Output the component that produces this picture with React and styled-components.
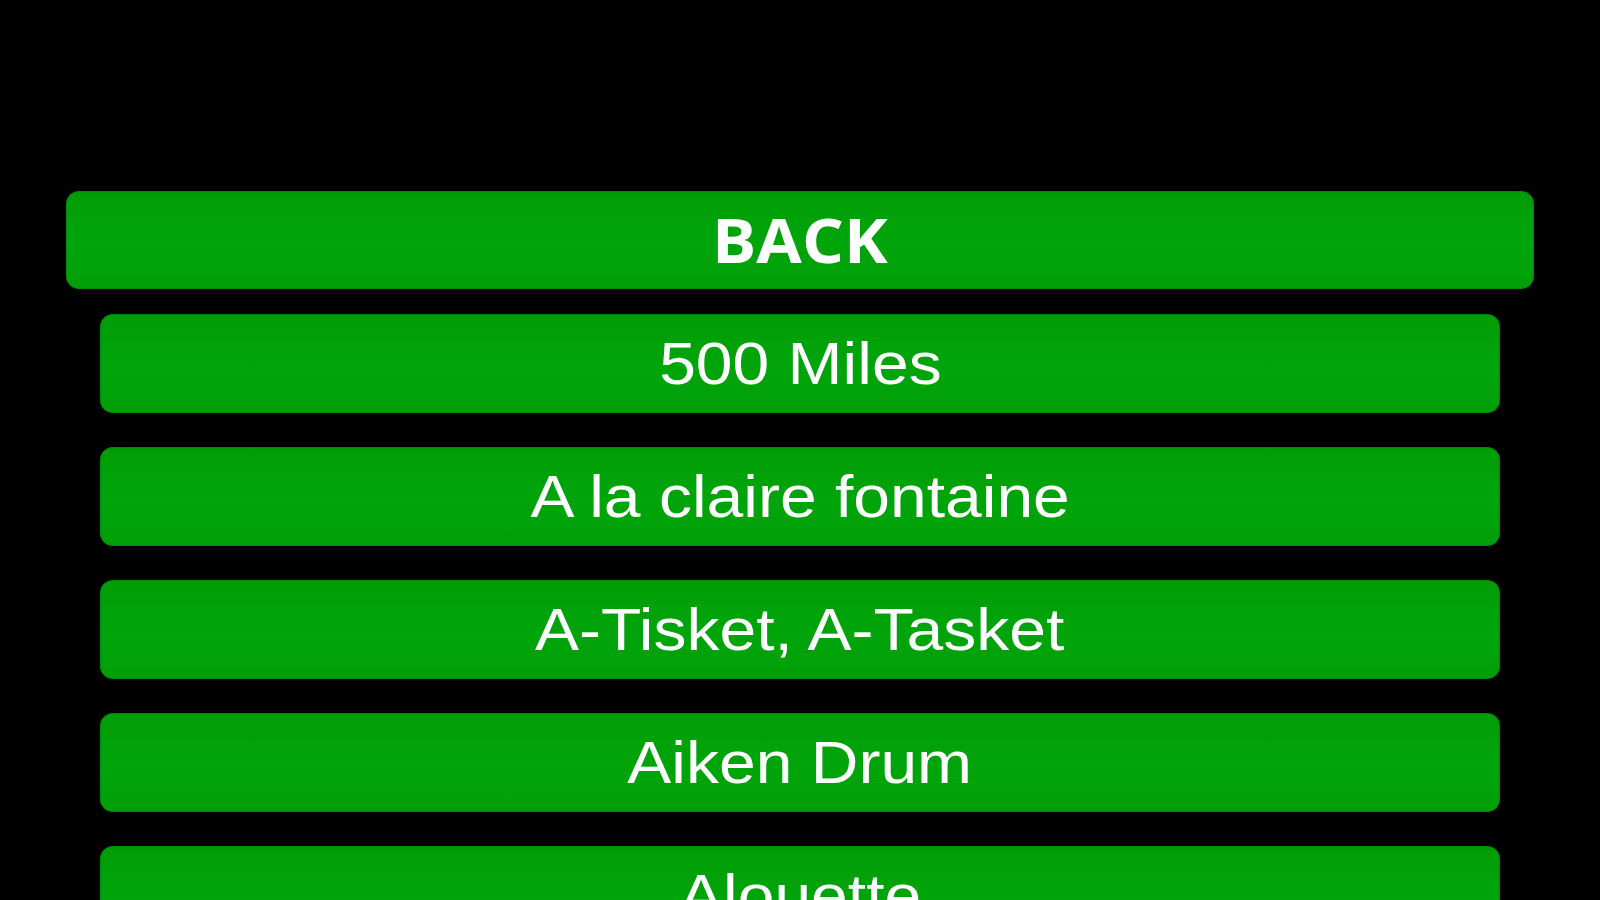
import React from 'react';
import styled, { createGlobalStyle } from 'styled-components';

const songs = [
  '500 Miles',
  'A la claire fontaine',
  'A-Tisket, A-Tasket',
  'Aiken Drum',
  'Alouette',
  'Baa Baa Black Sheep',
];

const GlobalStyle = createGlobalStyle`
  html, body {
    margin: 0;
    padding: 0;
    background: #000;
    overflow: hidden;
    height: 900px;
  }
`;

const Page = styled.div`
  background: #000;
  height: 900px;
  padding-top: 191px;
  box-sizing: border-box;
  display: flex;
  flex-direction: column;
  align-items: center;
`;

const Bar = styled.div`
  box-sizing: border-box;
  flex-shrink: 0;
  display: flex;
  align-items: center;
  justify-content: center;
  width: ${(p) => (p.wide ? '1468px' : '1400px')};
  height: ${(p) => (p.wide ? '98px' : '99px')};
  margin-bottom: ${(p) => (p.wide ? '25px' : '34px')};
  border-radius: 13px;
  background: linear-gradient(180deg, #009c06 0%, #00a50b 55%, #009e07 100%);
  box-shadow: inset 0 0 0 1px rgba(0, 90, 0, 0.3);
  color: #fff;
  cursor: pointer;
`;

const Label = styled.span`
  display: inline-block;
  white-space: nowrap;
  transform: scaleX(1.1);
  font-family: ${(p) => (p.bold ? '"Open Sans", "Liberation Sans", sans-serif' : '"Liberation Sans", Arial, sans-serif')};
  font-weight: ${(p) => (p.bold ? 700 : 400)};
  font-size: 60px;
  line-height: 1;
`;

const App = () => {
  return (
    <Page>
      <GlobalStyle />
      <Bar wide>
        <Label bold>BACK</Label>
      </Bar>
      {songs.map((s) => (
        <Bar key={s}>
          <Label>{s}</Label>
        </Bar>
      ))}
    </Page>
  );
};

export default App;
